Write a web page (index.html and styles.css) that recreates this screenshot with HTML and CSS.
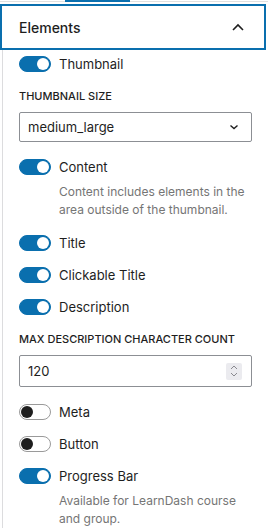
FILE: index.html
```html
<!DOCTYPE html>
<html lang="en">
<head>
    <meta charset="UTF-8">
    <meta name="viewport" content="width=device-width, initial-scale=1.0">
    <title>Elements</title>
    <link rel="stylesheet" href="styles.css">
</head>
<body>
    <div class="tabs">
        <span class="tab-active"></span>
    </div>

    <button class="panel-header" type="button">
        <span>Elements</span>
        <svg class="chevron" width="12" height="8" viewBox="0 0 12 8">
            <path d="M1 7 L6 2 L11 7" fill="none" stroke="#1e1e1e" stroke-width="1.6"/>
        </svg>
    </button>

    <div class="panel-body">
        <div class="toggle-row">
            <span class="toggle on"></span>
            <span>Thumbnail</span>
        </div>

        <label class="field-label">Thumbnail size</label>
        <div class="select">
            <span>medium_large</span>
            <svg width="10" height="6" viewBox="0 0 10 6">
                <path d="M1.5 1.5 L5 4.5 L8.5 1.5" fill="none" stroke="#1e1e1e" stroke-width="1.4"/>
            </svg>
        </div>

        <div class="toggle-row">
            <span class="toggle on"></span>
            <span>Content</span>
        </div>
        <p class="help">Content includes elements in the area outside of the thumbnail.</p>

        <div class="toggle-row">
            <span class="toggle on"></span>
            <span>Title</span>
        </div>
        <div class="toggle-row">
            <span class="toggle on"></span>
            <span>Clickable Title</span>
        </div>
        <div class="toggle-row">
            <span class="toggle on"></span>
            <span>Description</span>
        </div>

        <label class="field-label">Max description character count</label>
        <div class="number">
            <span>120</span>
            <span class="spin">
                <svg width="8" height="14" viewBox="0 0 8 14">
                    <path d="M1 5 L4 2 L7 5 M1 9 L4 12 L7 9" fill="none" stroke="#8a8a90" stroke-width="1"/>
                </svg>
            </span>
        </div>

        <div class="toggle-row">
            <span class="toggle"></span>
            <span>Meta</span>
        </div>
        <div class="toggle-row">
            <span class="toggle"></span>
            <span>Button</span>
        </div>
        <div class="toggle-row">
            <span class="toggle on"></span>
            <span>Progress Bar</span>
        </div>
        <p class="help">Available for LearnDash course and group.</p>
    </div>
</body>
</html>
```

FILE: styles.css
```css
body {
    margin: 0;
    font-family: Inter, "Noto Sans", sans-serif;
    font-size: 13px;
    color: #1e1e1e;
    background: white;
    width: 268px;
    height: 532px;
    overflow: hidden;
}
.tabs {
    display: flex;
    height: 1px;
    border-bottom: 1px solid #e0e0e0;
    margin-bottom: 2px;
}
.tab-active {
    margin-left: 65px;
    width: 65px;
    height: 2px;
    background: #0a6fae;
}
.panel-header {
    display: flex;
    align-items: center;
    justify-content: space-between;
    width: 266px;
    height: 46px;
    margin: 0;
    padding: 0 20px 0 17px;
    border: 2px solid #0a6fae;
    background: white;
    font-family: inherit;
    font-size: 14px;
    font-weight: 500;
    color: #1e1e1e;
    box-sizing: border-box;
}
.chevron {
    display: block;
}
.panel-body {
    margin-left: 2px;
    border-left: 1px solid #dcdcde;
    padding: 6px 16px 0 16px;
}
.toggle-row {
    display: flex;
    align-items: center;
    gap: 8px;
    height: 16px;
    margin-bottom: 16px;
    line-height: 16px;
}
.toggle {
    position: relative;
    width: 32px;
    height: 16px;
    border-radius: 8px;
    border: 1px solid #9a9a9a;
    background: white;
    box-sizing: border-box;
    flex-shrink: 0;
}
.toggle::after {
    content: "";
    position: absolute;
    top: 1px;
    left: 1px;
    width: 12px;
    height: 12px;
    border-radius: 50%;
    background: #1e1e1e;
}
.toggle.on {
    background: #0a6fae;
    border-color: #0a6fae;
}
.toggle.on::after {
    left: 17px;
    background: white;
}
.field-label {
    display: block;
    font-size: 11px;
    font-weight: 500;
    text-transform: uppercase;
    line-height: 16px;
    margin-bottom: 8px;
}
.select,
.number {
    display: flex;
    align-items: center;
    justify-content: space-between;
    height: 30px;
    padding: 0 12px 0 8px;
    border: 1px solid #8c8f94;
    border-radius: 2px;
    margin-bottom: 17px;
    box-sizing: border-box;
}
.number {
    height: 32px;
    padding-right: 9px;
}
.spin {
    display: flex;
    align-items: center;
    justify-content: center;
    width: 16px;
    height: 17px;
    background: #ebebef;
    border-radius: 2px;
}
.help {
    margin: -8px 0 16px 24px;
    padding-left: 16px;
    font-size: 12px;
    line-height: 18px;
    color: #757575;
}
```
